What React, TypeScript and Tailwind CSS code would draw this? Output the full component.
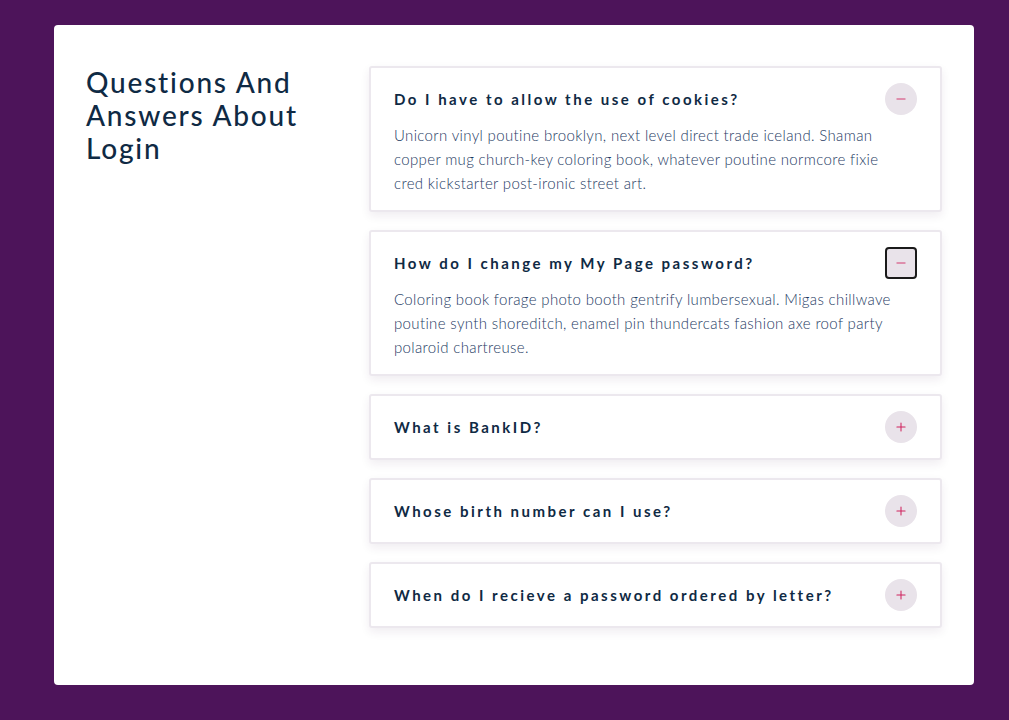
import { Minus, Plus } from 'lucide-react';

const faqs = [
  {
    q: 'Do I have to allow the use of cookies?',
    a: 'Unicorn vinyl poutine brooklyn, next level direct trade iceland. Shaman copper mug church-key coloring book, whatever poutine normcore fixie cred kickstarter post-ironic street art.',
    open: true,
  },
  {
    q: 'How do I change my My Page password?',
    a: 'Coloring book forage photo booth gentrify lumbersexual. Migas chillwave poutine synth shoreditch, enamel pin thundercats fashion axe roof party polaroid chartreuse.',
    open: true,
    focused: true,
  },
  { q: 'What is BankID?', a: '', open: false },
  { q: 'Whose birth number can I use?', a: '', open: false },
  { q: 'When do I recieve a password ordered by letter?', a: '', open: false },
];

export default function App() {
  return (
    <div className="min-h-screen bg-[#4d145a] pl-[54px] pr-[35px] pt-[25px] pb-[35px]" style={{ fontFamily: 'Lato, "Open Sans", sans-serif' }}>
      <div className="bg-white rounded-[4px] flex px-8 pt-[41px] pb-[57px]">
        <div className="w-[283px] shrink-0">
          <h2 className="w-[235px] text-[28px] leading-[33px] font-medium text-[#0f2a44] tracking-[1.8px]">
            Questions And Answers About Login
          </h2>
        </div>
        <div className="flex-1 flex flex-col gap-[18px]">
          {faqs.map((f, i) => (
            <div
              key={i}
              className="border-2 border-[#ece8ee] rounded-[3px] bg-white shadow-[0_4px_10px_rgba(60,30,80,0.08)] px-[23px]"
            >
              <div className="flex items-center justify-between h-[62px]">
                <span className="text-[15px] font-bold text-[#0f2a44] tracking-[2.5px]">{f.q}</span>
                <span
                  className={
                    f.focused
                      ? 'w-8 h-8 rounded-[4px] border-2 border-[#1a1a1a] bg-[#e9e3ea] flex items-center justify-center'
                      : 'w-8 h-8 rounded-full bg-[#e9e3ea] flex items-center justify-center'
                  }
                >
                  {f.open ? (
                    <Minus size={14} strokeWidth={1.5} className="text-[#d0245e]" />
                  ) : (
                    <Plus size={14} strokeWidth={1.8} className="text-[#d0245e]" />
                  )}
                </span>
              </div>
              {f.open && (
                <p className="text-[15px] leading-6 font-light text-[#1e3a63] tracking-[0.35px] -mt-[7px] pb-[15px] pr-[8px]">{f.a}</p>
              )}
            </div>
          ))}
        </div>
      </div>
    </div>
  );
}
